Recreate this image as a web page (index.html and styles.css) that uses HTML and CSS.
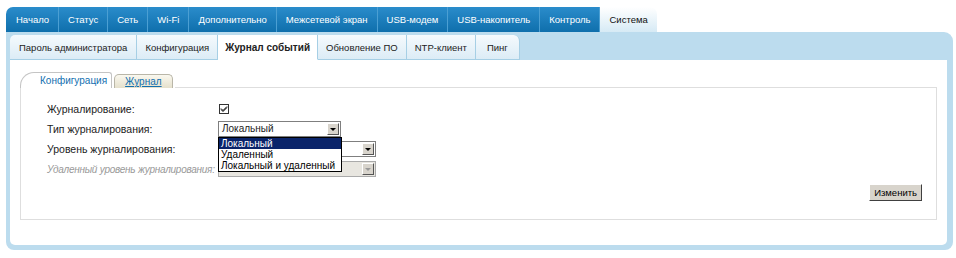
FILE: index.html
```html
<!DOCTYPE html>
<html lang="ru">
<head>
    <meta charset="UTF-8">
    <title>Журнал событий</title>
    <link rel="stylesheet" href="styles.css">
</head>
<body>
    <div class="page">
        <div class="menu">
            <a class="menu-item">Начало</a>
            <a class="menu-item">Статус</a>
            <a class="menu-item">Сеть</a>
            <a class="menu-item">Wi-Fi</a>
            <a class="menu-item">Дополнительно</a>
            <a class="menu-item">Межсетевой экран</a>
            <a class="menu-item">USB-модем</a>
            <a class="menu-item">USB-накопитель</a>
            <a class="menu-item">Контроль</a>
            <a class="menu-item active">Система</a>
        </div>

        <div class="panel">
            <div class="subtabs">
                <a class="subtab first">Пароль администратора</a>
                <a class="subtab">Конфигурация</a>
                <a class="subtab active">Журнал событий</a>
                <a class="subtab">Обновление ПО</a>
                <a class="subtab">NTP-клиент</a>
                <a class="subtab last">Пинг</a>
            </div>

            <div class="content">
                <div class="inner-tabs">
                    <span class="itab active">Конфигурация</span>
                    <span class="itab">Журнал</span>
                    <span class="itab-line"></span>
                </div>

                <div class="box">
                    <div class="form">
                        <label>Журналирование:</label>
                        <div class="field">
                            <span class="check">
                                <svg width="8" height="8" viewBox="0 0 8 8"><path d="M1 3.5 L3 5.5 L7 1.5 M1 4.5 L3 6.5 L7 2.5" stroke="#000" stroke-width="1" fill="none"/></svg>
                            </span>
                        </div>

                        <label>Тип журналирования:</label>
                        <div class="field">
                            <div class="select short">
                                <span class="select-text">Локальный</span>
                                <span class="select-btn"><i></i></span>
                                <ul class="dropdown">
                                    <li class="selected">Локальный</li>
                                    <li>Удаленный</li>
                                    <li>Локальный и удаленный</li>
                                </ul>
                            </div>
                        </div>

                        <label>Уровень журналирования:</label>
                        <div class="field">
                            <div class="select">
                                <span class="select-text"></span>
                                <span class="select-btn"><i></i></span>
                            </div>
                        </div>

                        <label class="disabled">Удаленный уровень журналирования:</label>
                        <div class="field">
                            <div class="select off">
                                <span class="select-text"></span>
                                <span class="select-btn"><i></i></span>
                            </div>
                        </div>
                    </div>

                    <div class="actions">
                        <button>Изменить</button>
                    </div>
                </div>
            </div>
        </div>
    </div>
</body>
</html>
```

FILE: styles.css
```css
body {
    margin: 0;
    background: #ffffff;
    font-family: "Liberation Sans", Arial, sans-serif;
    font-size: 11px;
    color: #222;
}
.page {
    padding: 7px 3px 0 6px;
}

/* top menu */
.menu {
    display: flex;
    height: 25px;
}
.menu-item {
    display: flex;
    align-items: center;
    flex-shrink: 0;
    white-space: nowrap;
    padding: 0 9px 1px 9px;
    color: #ffffff;
    font-size: 9.5px;
    background: linear-gradient(#2a8ccb, #0f6fac);
    border-right: 1px solid #4b9fd3;
}
.menu-item:first-child {
    border-top-left-radius: 7px;
    padding-left: 10px;
}
.menu-item.active {
    color: #111;
    background: linear-gradient(#ffffff, #d6eaf5);
    border-right: none;
    border-top-right-radius: 7px;
    padding: 0 9px 1px 9px;
}

/* blue panel */
.panel {
    background: #bcdcee;
    border-radius: 0 9px 8px 8px;
    padding: 3px 6px 5px 4px;
}
.subtabs {
    display: flex;
    height: 25px;
}
.subtab {
    display: flex;
    align-items: center;
    white-space: nowrap;
    padding: 0 8px;
    font-size: 9.5px;
    color: #222;
    background: linear-gradient(#f5fafd, #dcecf6);
    border-right: 1px solid #a6cfe5;
    border-bottom: 1px solid #a6cfe5;
}
.subtab.first {
    border-top-left-radius: 5px;
    padding: 0 9px;
}
.subtab.last {
    border-top-right-radius: 6px;
    padding: 0 11px;
}
.subtab.active {
    background: #ffffff;
    font-weight: bold;
    font-size: 10px;
    padding: 0 7px;
    border-bottom-color: #ffffff;
}

/* white content */
.content {
    background: #ffffff;
    border-radius: 0 0 5px 5px;
    padding: 13px 10px 25px 10px;
}
.inner-tabs {
    display: flex;
    align-items: flex-end;
    height: 15px;
}
.itab {
    flex: none;
    height: 13px;
    padding: 0 10px;
    margin-right: 2px;
    font-size: 10px;
    line-height: 13px;
    color: #1270b0;
    background: linear-gradient(#faf8ef, #e5e0cc);
    border: 1px solid #b9b6a8;
    border-bottom: none;
    border-radius: 5px 5px 0 0;
    text-decoration: underline;
}
.itab.active {
    height: 15px;
    line-height: 15px;
    padding: 0 4px 0 19px;
    background: #ffffff;
    border-color: #c4c4c4;
    border-radius: 14px 3px 0 0;
    text-decoration: none;
}
.itab-line {
    flex: 1;
    border-bottom: 1px solid #dedede;
}
.box {
    border: 1px solid #dedede;
    border-top: none;
    padding: 11px 14px 18px 26px;
}

.form {
    display: grid;
    grid-template-columns: 171px auto;
    grid-auto-rows: 20px;
    align-items: center;
}
.form label {
    color: #222;
    white-space: nowrap;
    font-size: 10.5px;
}
.form label.disabled {
    color: #999;
    font-style: italic;
    font-size: 10px;
    letter-spacing: -0.25px;
}
.field {
    display: flex;
    align-items: center;
}
.check {
    display: flex;
    align-items: center;
    justify-content: center;
    width: 8px;
    height: 8px;
    margin-left: 1px;
    border: 1px solid #333;
    background: #fff;
}

.select {
    position: relative;
    display: flex;
    width: 156px;
    height: 14px;
    border: 1px solid #7f7f7f;
    background: #fff;
    font-size: 10px;
}
.select.short {
    width: 121px;
}
.select-text {
    flex: 1;
    padding-left: 3px;
    line-height: 14px;
    white-space: nowrap;
    overflow: hidden;
}
.select-btn {
    display: flex;
    align-items: center;
    justify-content: center;
    width: 10px;
    margin: 1px;
    background: #d8d4cc;
    border: 1px solid;
    border-color: #fff #555 #555 #fff;
}
.select-btn i {
    width: 0;
    height: 0;
    border-left: 3px solid transparent;
    border-right: 3px solid transparent;
    border-top: 3px solid #000;
}
.select.off {
    background: #e8e6e0;
    border-color: #aaa;
}
.select.off .select-btn i {
    border-top-color: #999;
}

.dropdown {
    position: absolute;
    top: 15px;
    left: -1px;
    width: 122px;
    margin: 0;
    padding: 0;
    list-style: none;
    background: #fff;
    border: 1px solid #000;
    z-index: 2;
}
.dropdown li {
    height: 11px;
    line-height: 11px;
    padding: 0 2px;
    font-size: 10px;
    color: #000;
    white-space: nowrap;
}
.dropdown li.selected {
    background: #0a246a;
    color: #fff;
}

.actions {
    display: flex;
    justify-content: flex-end;
    margin-top: 5px;
}
button {
    font-family: "Liberation Sans", Arial, sans-serif;
    font-size: 9.5px;
    height: 17px;
    padding: 0 4px;
    background: #d8d4cc;
    border: 1px solid;
    border-color: #fff #404040 #404040 #fff;
    color: #000;
}
```
